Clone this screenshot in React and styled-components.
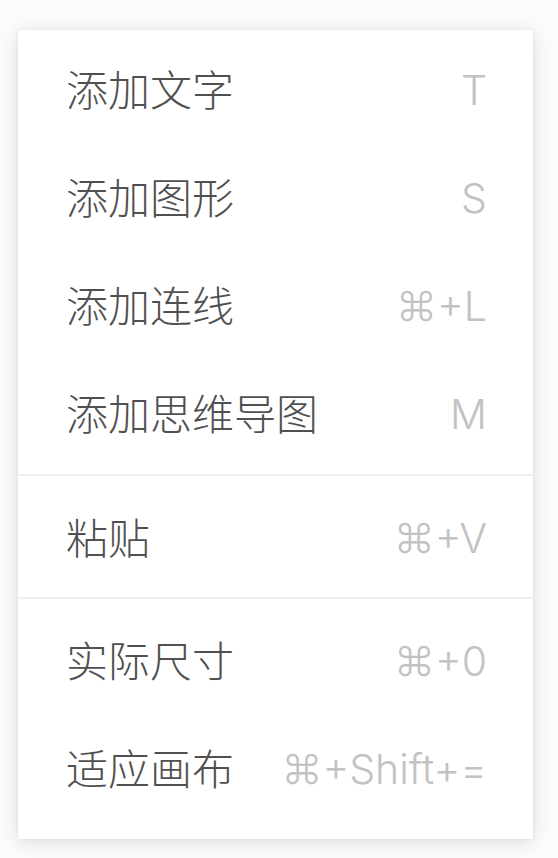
import React from "react";
import styled, { createGlobalStyle } from "styled-components";

const Global = createGlobalStyle`
  html, body { margin: 0; padding: 0; background: #ffffff; }
  body { width: 558px; height: 858px; overflow: hidden; }
`;

const Page = styled.div`
  width: 558px;
  height: 858px;
  box-sizing: border-box;
  padding: 30px 25px 0 18px;
  background: #fbfbfb;
`;

const Menu = styled.div`
  width: 515px;
  height: 809px;
  box-sizing: border-box;
  background: #ffffff;
  border-radius: 2px;
  box-shadow: 0 3px 18px rgba(0, 0, 0, 0.12), 0 0 4px rgba(0, 0, 0, 0.06);
  display: flex;
  flex-direction: column;
`;

const Group = styled.div`
  display: flex;
  flex-direction: column;
  padding-top: ${(p) => p.$top}px;
  padding-bottom: ${(p) => p.$bottom}px;
`;

const Divider = styled.div`
  height: 2px;
  background: #efefef;
  flex-shrink: 0;
`;

const Row = styled.div`
  height: 108px;
  display: flex;
  align-items: center;
  justify-content: space-between;
  padding: 0 46px 0 48px;
`;

const Label = styled.span`
  font-family: "Noto Sans CJK SC", "Noto Sans", sans-serif;
  font-size: 42px;
  font-weight: 300;
  line-height: 1;
  color: #505050;
  margin-top: -4px;
`;

const Shortcut = styled.span`
  font-family: Inter, "DejaVu Sans", "Noto Sans", sans-serif;
  font-size: 41px;
  line-height: 1;
  color: #c2c2c2;
  font-weight: 300;
`;

const groups = [
  {
    top: 6,
    bottom: 6,
    items: [
      ["添加文字", "T"],
      ["添加图形", "S"],
      ["添加连线", "⌘+L"],
      ["添加思维导图", "M"],
    ],
  },
  { top: 8, bottom: 5, items: [["粘贴", "⌘+V"]] },
  {
    top: 8,
    bottom: 16,
    items: [
      ["实际尺寸", "⌘+0"],
      ["适应画布", "⌘+Shift+="],
    ],
  },
];

export default function App() {
  return (
    <>
      <Global />
      <Page>
        <Menu>
          {groups.map((g, gi) => (
            <React.Fragment key={gi}>
              {gi > 0 && <Divider />}
              <Group $top={g.top} $bottom={g.bottom}>
                {g.items.map(([label, key]) => (
                  <Row key={label}>
                    <Label>{label}</Label>
                    <Shortcut>{key}</Shortcut>
                  </Row>
                ))}
              </Group>
            </React.Fragment>
          ))}
        </Menu>
      </Page>
    </>
  );
}
